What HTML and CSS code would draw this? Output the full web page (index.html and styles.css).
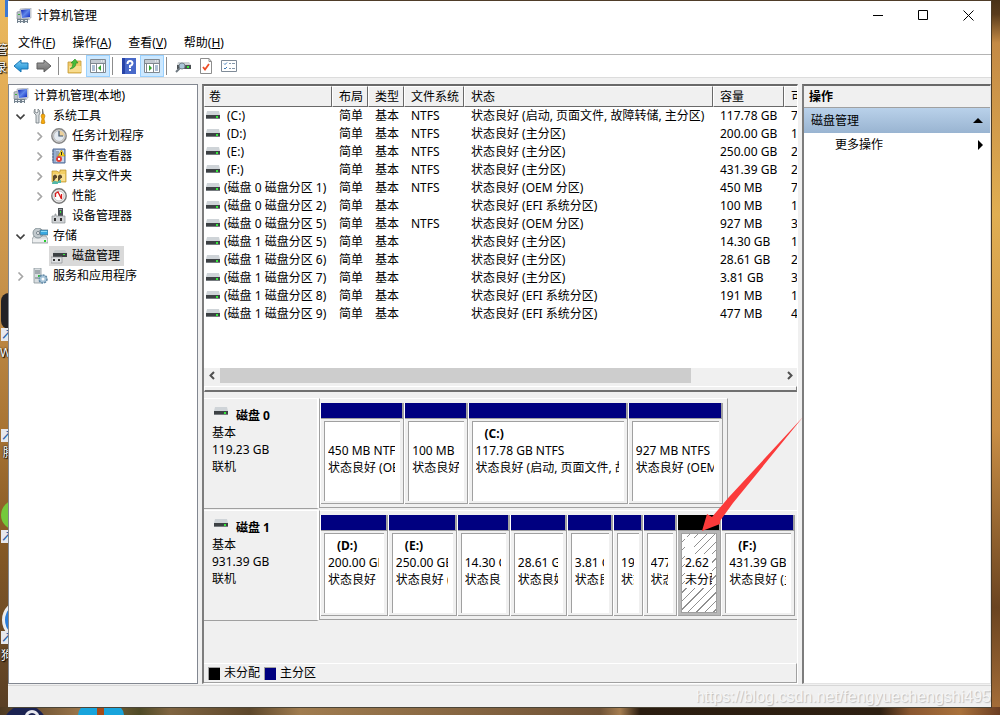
FILE: index.html
```html
<!DOCTYPE html>
<html lang="zh-CN">
<head>
<meta charset="utf-8">
<title>计算机管理</title>
<link rel="stylesheet" href="styles.css">
</head>
<body>
<svg class="defs" aria-hidden="true">
  <defs>
    <linearGradient id="gBlue" x1="0" y1="0" x2="1" y2="1"><stop offset="0" stop-color="#0a1fb0"/><stop offset=".5" stop-color="#5f86ea"/><stop offset="1" stop-color="#0a24c0"/></linearGradient>
    <linearGradient id="gArrow" x1="0" y1="0" x2="0" y2="1"><stop offset="0" stop-color="#7fd0f5"/><stop offset="1" stop-color="#0f86d0"/></linearGradient>
    <linearGradient id="gGrey" x1="0" y1="0" x2="0" y2="1"><stop offset="0" stop-color="#a8a8a8"/><stop offset="1" stop-color="#6c6c6c"/></linearGradient>
    <symbol id="computer" viewBox="0 0 16 16"><path d="M1 4l4-1v8H1z" fill="#b9c0c8" stroke="#77808a" stroke-width=".6"/><path d="M4 1l11-1v10l-10 1z" fill="#d8dce2" stroke="#9aa2ac" stroke-width=".6"/><path d="M5 2l9-1v8l-8 1z" fill="url(#gBlue)"/><path d="M7 10h6l1 2H7z" fill="#b3bac2"/><path d="M1 11h11v4H1z" fill="#74828e"/><path d="M2 12h2v1H2zM5 12h2v1H5zM9 12h2v1H9zM2 14h2v1H2zM5 14h2v1H5zM9 14h2v1H9z" fill="#eef2f5"/><path d="M2 6h2v1H2z" fill="#3cb43c"/></symbol>
    <symbol id="drive" viewBox="0 0 14 8"><path d="M1 0h12l1 4H0z" fill="#cfd4d8"/><path d="M0 4h14v4H0z" fill="#3d4144"/><path d="M0 7h14v1H0z" fill="#777c80"/><path d="M10 5h2v2h-2z" fill="#35e83b"/></symbol>
    <symbol id="tools" viewBox="0 0 16 16"><path d="M3 1v3l2 1 1-1V1q2 1 2 4L7 7v8H4V7L2 5q0-3 1-4z" fill="#d8dcdf" stroke="#70787e" stroke-width=".8"/><path d="M10 1h1l1 6h-2z" fill="#777"/><path d="M9 8q0-2 2-2t2 2l-1 3 1 4q-2 2-4 0l1-4z" fill="#f5a90c" stroke="#b97700" stroke-width=".6"/></symbol>
    <symbol id="clock" viewBox="0 0 16 16"><circle cx="8" cy="8" r="7.2" fill="#ddd" stroke="#858585" stroke-width="1.4"/><circle cx="8" cy="8" r="5.4" fill="#e4eaf0" stroke="#999" stroke-width=".6"/><path d="M8 8V2.600A5.400 5.400 0 0 1 13.400 8z" fill="#ecd19c"/><path d="M8 3v5h4" fill="none" stroke="#3c536d" stroke-width="1.200"/></symbol>
    <symbol id="events" viewBox="0 0 16 16"><path d="M2 1h12v14H2z" fill="#96aed0" stroke="#526b96"/><path d="M5 2h8v12H5z" fill="#c9d7ea"/><path d="M5 4h3M5 6h3M5 8h2M1 3h2M1 6h2M1 9h2M1 12h2" stroke="#5c6f89"/><path d="M10.500 2l3.500 6H7z" fill="#ffda25" stroke="#a98400" stroke-width=".6"/><path d="M10 4h1v3h-1z" fill="#222"/><circle cx="8" cy="11" r="3" fill="#e04038"/><path d="M7 10l2 2M9 10l-2 2" stroke="#fff"/></symbol>
    <symbol id="shared" viewBox="0 0 16 16"><path d="M1 3h5l1 1h2V2h6v12H1z" fill="#f3cf64" stroke="#b88d27" stroke-width=".7"/><path d="M2 6h12v7H2z" fill="#f9df91"/><path d="M2 8q2-3 4 0v2H5l-2 3H2zM7 8q2-3 4 0v2h-1l-2 3H7z" fill="#5c4a2c"/><path d="M1 16q0-3 3-3t3 3zM6 15q1-3 4-3v3z" fill="#51b7a9"/></symbol>
    <symbol id="perf" viewBox="0 0 16 16"><circle cx="8" cy="8" r="7.200" fill="#eee" stroke="#777" stroke-width="1.400"/><circle cx="8" cy="8" r="5" fill="#fff" stroke="#aaa" stroke-width=".7"/><path d="M4.500 9V5.500L7 4l3.500 7V6" fill="none" stroke="#d81c1c" stroke-width="1.300"/></symbol>
    <symbol id="device" viewBox="0 0 16 16"><path d="M7 0h5v8H7z" fill="#4c5256"/><path d="M8 1h3v1H8z" fill="#9da4a8"/><path d="M9 3h1v2H9z" fill="#35e83b"/><path d="M1 8h3V6h1v2h9v7H1z" fill="#d0d3d6" stroke="#8b9094" stroke-width=".7"/><path d="M3 10h2v3H3zM9 10h2v3H9z" fill="#333"/></symbol>
    <symbol id="storage" viewBox="0 0 16 16"><path d="M2 8h12l2 3v4H0v-4z" fill="#dee1e3" stroke="#858c90" stroke-width=".7"/><circle cx="6" cy="5" r="5" fill="#c2cace" stroke="#76858c" stroke-width=".8"/><circle cx="6" cy="5" r="1.500" fill="#fff" stroke="#75828a"/><path d="M8 2h8v5H8z" fill="#39a9e2" stroke="#536c7a" stroke-width=".7"/><path d="M9 3h6v1H9z" fill="#8cdbf7"/><path d="M1 11h14v3H1z" fill="#eceeef"/><path d="M12 12h2v2h-2z" fill="#27cc30"/></symbol>
    <symbol id="diskmgmt" viewBox="0 0 16 16"><path d="M4 2h10l2 3H2z" fill="#c6cacc"/><path d="M2 5h14v4H2z" fill="#3c4144"/><path d="M12 6h2v1h-2z" fill="#35e83b"/><path d="M0 9h11v6H0z" fill="#dfe1e3" stroke="#8c9194" stroke-width=".7"/><path d="M2 11h2v2H2zM7 11h2v2H7z" fill="#333"/></symbol>
    <symbol id="services" viewBox="0 0 16 16"><path d="M2 0h7v15H2z" fill="#d8dde0" stroke="#89949b" stroke-width=".8"/><path d="M3 3h5M3 5h5M3 10h3" stroke="#6b777e"/><path d="M6 7h2v2H6z" fill="#34bb42"/><circle cx="11" cy="11" r="4" fill="#a5c3d8" stroke="#6087a3" stroke-width="1.500" stroke-dasharray="2 1"/><circle cx="11" cy="11" r="1.500" fill="#fff"/></symbol>
    <symbol id="chevron-down" viewBox="0 0 9 9"><path d="M.5 2.500l4 4 4-4" fill="none" stroke="#404040" stroke-width="1.600"/></symbol>
    <symbol id="chevron-right" viewBox="0 0 9 9"><path d="M2.500.5l4 4-4 4" fill="none" stroke="#a6a6a6" stroke-width="1.600"/></symbol>
    <symbol id="arrow-left" viewBox="0 0 16 14"><path d="M1 7l7-6v3h7v6H8v3z"/></symbol>
    <symbol id="arrow-right" viewBox="0 0 16 14"><path d="M15 7L8 1v3H1v6h7v3z"/></symbol>
    <symbol id="folder-up" viewBox="0 0 16 16"><path d="M1 4h7l1-1h5v12H1z" fill="#f0c968" stroke="#c39a35" stroke-width=".8"/><path d="M2 8h12v6H2z" fill="#f8dc8e"/><path d="M3 11q3-2 3-6H4l4-4 3 4H9q0 5-6 6z" fill="#46bd3b" stroke="#258620" stroke-width=".6"/></symbol>
    <symbol id="pane-left" viewBox="0 0 16 14"><path d="M.5.5h15v13H.5z" fill="#fff" stroke="#808890"/><path d="M1 1h14v3H1z" fill="#c3cad1"/><path d="M11 2h1M13 2h1" stroke="#fff"/><path d="M0 4.500h16M6.500 5v9M13.500 5v9" stroke="#808890"/><path d="M2 7h3M2 9h3M2 11h3" stroke="#5a7ea8"/><path d="M11 6v6L8 9z" fill="#35a52e"/></symbol>
    <symbol id="pane-right" viewBox="0 0 16 14"><path d="M.5.5h15v13H.5z" fill="#fff" stroke="#808890"/><path d="M1 1h14v3H1z" fill="#c3cad1"/><path d="M11 2h1M13 2h1" stroke="#fff"/><path d="M0 4.500h16M2.500 5v9M9.500 5v9" stroke="#808890"/><path d="M11 7h3M11 9h3M11 11h3" stroke="#5a7ea8"/><path d="M5 6v6l3-3z" fill="#35a52e"/></symbol>
    <symbol id="help" viewBox="0 0 14 16"><path d="M0 0h14v16H0z" fill="#2743a7"/><path d="M3 0h11v16H3z" fill="#4869c9"/><path d="M5.500 6q0-3 2.500-3t2.500 2.500Q10.500 7 8 8v2" fill="none" stroke="#fff" stroke-width="2"/><path d="M7 11h2v2H7z" fill="#fff"/></symbol>
    <symbol id="rescan" viewBox="0 0 16 16"><path d="M3 4h11l2 3H2z" fill="#cdd1d4"/><path d="M2 7h14v4H2z" fill="#4b5053"/><path d="M12 8h2v2h-2z" fill="#35e83b"/><path d="M5 10l-4 4" stroke="#6e7880" stroke-width="2"/><circle cx="7" cy="8" r="3" fill="#a9c4d8" stroke="#75838d"/></symbol>
    <symbol id="check-doc" viewBox="0 0 12 16"><path d="M.5.5H9l2.500 3v12H.5z" fill="#fff" stroke="#8d8d8d"/><path d="M9 .5v3h2.500" fill="none" stroke="#8d8d8d"/><path d="M3 9l2 2.500L9 6" fill="none" stroke="#ee4d25" stroke-width="1.800"/></symbol>
    <symbol id="list" viewBox="0 0 16 12"><path d="M.5.5h15v11H.5z" fill="#fff" stroke="#7f8b98"/><path d="M3 3.500l1 1 2-2M3 8l1 1 2-2" fill="none" stroke="#3b78b6"/><path d="M8 3.500h2M11 3.500h3M8 8.500h2M11 8.500h3" stroke="#8497aa"/></symbol>
  </defs>
</svg>

<div class="desktop-icons" aria-hidden="true">
  <span class="shape red"></span>
  <span class="caption c1">管</span><span class="caption c2">录</span>
  <span class="shape dark"></span><span class="link l1">↗</span><span class="caption c3">W</span>
  <span class="link l2">↗</span><span class="caption c4">腾</span>
  <span class="shape green"></span><span class="link l3">↗</span>
  <span class="shape blue"></span><span class="link l4">↗</span><span class="caption c5">狗</span>
  <span class="task navy"></span><span class="task cyan"></span>
</div>

<div class="window">
  <header class="titlebar">
    <svg class="i16"><use href="#computer"/></svg>
    <h1>计算机管理</h1>
    <button type="button" aria-label="最小化"><svg class="i11" viewBox="0 0 11 11"><path d="M0 5.500h10"/></svg></button>
    <button type="button" aria-label="最大化"><svg class="i11" viewBox="0 0 11 11"><path d="M.5.5h9v9h-9z"/></svg></button>
    <button type="button" aria-label="关闭"><svg class="i11" viewBox="0 0 11 11"><path d="M.5.5l10 10M10.500.5l-10 10"/></svg></button>
  </header>
  <nav class="menubar">
    <button type="button">文件(<u>F</u>)</button>
    <button type="button">操作(<u>A</u>)</button>
    <button type="button">查看(<u>V</u>)</button>
    <button type="button">帮助(<u>H</u>)</button>
  </nav>
  <div class="toolbar" role="toolbar">
    <div class="history">
      <button type="button" aria-label="后退"><svg class="nav back"><use href="#arrow-left"/></svg></button>
      <button type="button" aria-label="前进"><svg class="nav forward"><use href="#arrow-right"/></svg></button>
    </div>
    <i class="sep"></i>
    <button type="button" aria-label="上移"><svg class="i16"><use href="#folder-up"/></svg></button>
    <button type="button" class="on" aria-label="显示控制台树"><svg class="i16x14"><use href="#pane-left"/></svg></button>
    <i class="sep"></i>
    <button type="button" aria-label="帮助"><svg class="i16"><use href="#help"/></svg></button>
    <button type="button" class="on" aria-label="显示操作窗格"><svg class="i16x14"><use href="#pane-right"/></svg></button>
    <i class="sep"></i>
    <button type="button" aria-label="重新扫描"><svg class="i16"><use href="#rescan"/></svg></button>
    <button type="button" aria-label="属性"><svg class="i16"><use href="#check-doc"/></svg></button>
    <button type="button" aria-label="设置"><svg class="i16x12"><use href="#list"/></svg></button>
  </div>

  <div class="panes">
    <nav class="tree">
      <span class="node"><svg class="i16"><use href="#computer"/></svg>计算机管理(本地)</span>
      <ul>
        <li><div class="row"><svg class="chev"><use href="#chevron-down"/></svg><span class="node"><svg class="i16"><use href="#tools"/></svg>系统工具</span></div>
          <ul>
            <li class="row"><svg class="chev"><use href="#chevron-right"/></svg><span class="node"><svg class="i16"><use href="#clock"/></svg>任务计划程序</span></li>
            <li class="row"><svg class="chev"><use href="#chevron-right"/></svg><span class="node"><svg class="i16"><use href="#events"/></svg>事件查看器</span></li>
            <li class="row"><svg class="chev"><use href="#chevron-right"/></svg><span class="node"><svg class="i16"><use href="#shared"/></svg>共享文件夹</span></li>
            <li class="row"><svg class="chev"><use href="#chevron-right"/></svg><span class="node"><svg class="i16"><use href="#perf"/></svg>性能</span></li>
            <li class="row"><svg class="chev"></svg><span class="node"><svg class="i16"><use href="#device"/></svg>设备管理器</span></li>
          </ul></li>
        <li><div class="row"><svg class="chev"><use href="#chevron-down"/></svg><span class="node"><svg class="i16"><use href="#storage"/></svg>存储</span></div>
          <ul><li class="row"><svg class="chev"></svg><span class="node selected"><svg class="i16"><use href="#diskmgmt"/></svg>磁盘管理</span></li></ul></li>
        <li><div class="row"><svg class="chev"><use href="#chevron-right"/></svg><span class="node"><svg class="i16"><use href="#services"/></svg>服务和应用程序</span></div></li>
      </ul>
    </nav>

    <main class="content">
      <section class="volumes">
        <div class="volume-list">
          <table>
            <colgroup><col class="w-name"><col class="w-short"><col class="w-short"><col class="w-fs"><col><col class="w-size"><col class="w-cut"></colgroup>
            <thead><tr><th>卷</th><th>布局</th><th>类型</th><th>文件系统</th><th>状态</th><th>容量</th><th>可用空间</th></tr></thead>
            <tbody>
              <tr><td class="letter"><svg class="drive"><use href="#drive"/></svg>(C:)</td><td>简单</td><td>基本</td><td>NTFS</td><td>状态良好 (启动, 页面文件, 故障转储, 主分区)</td><td>117.78 GB</td><td>7</td></tr>
              <tr><td class="letter"><svg class="drive"><use href="#drive"/></svg>(D:)</td><td>简单</td><td>基本</td><td>NTFS</td><td>状态良好 (主分区)</td><td>200.00 GB</td><td>1</td></tr>
              <tr><td class="letter"><svg class="drive"><use href="#drive"/></svg>(E:)</td><td>简单</td><td>基本</td><td>NTFS</td><td>状态良好 (主分区)</td><td>250.00 GB</td><td>2</td></tr>
              <tr><td class="letter"><svg class="drive"><use href="#drive"/></svg>(F:)</td><td>简单</td><td>基本</td><td>NTFS</td><td>状态良好 (主分区)</td><td>431.39 GB</td><td>2</td></tr>
              <tr><td><svg class="drive"><use href="#drive"/></svg>(磁盘 0 磁盘分区 1)</td><td>简单</td><td>基本</td><td>NTFS</td><td>状态良好 (OEM 分区)</td><td>450 MB</td><td>7</td></tr>
              <tr><td><svg class="drive"><use href="#drive"/></svg>(磁盘 0 磁盘分区 2)</td><td>简单</td><td>基本</td><td></td><td>状态良好 (EFI 系统分区)</td><td>100 MB</td><td>1</td></tr>
              <tr><td><svg class="drive"><use href="#drive"/></svg>(磁盘 0 磁盘分区 5)</td><td>简单</td><td>基本</td><td>NTFS</td><td>状态良好 (OEM 分区)</td><td>927 MB</td><td>3</td></tr>
              <tr><td><svg class="drive"><use href="#drive"/></svg>(磁盘 1 磁盘分区 5)</td><td>简单</td><td>基本</td><td></td><td>状态良好 (主分区)</td><td>14.30 GB</td><td>1</td></tr>
              <tr><td><svg class="drive"><use href="#drive"/></svg>(磁盘 1 磁盘分区 6)</td><td>简单</td><td>基本</td><td></td><td>状态良好 (主分区)</td><td>28.61 GB</td><td>2</td></tr>
              <tr><td><svg class="drive"><use href="#drive"/></svg>(磁盘 1 磁盘分区 7)</td><td>简单</td><td>基本</td><td></td><td>状态良好 (主分区)</td><td>3.81 GB</td><td>3</td></tr>
              <tr><td><svg class="drive"><use href="#drive"/></svg>(磁盘 1 磁盘分区 8)</td><td>简单</td><td>基本</td><td></td><td>状态良好 (EFI 系统分区)</td><td>191 MB</td><td>1</td></tr>
              <tr><td><svg class="drive"><use href="#drive"/></svg>(磁盘 1 磁盘分区 9)</td><td>简单</td><td>基本</td><td></td><td>状态良好 (EFI 系统分区)</td><td>477 MB</td><td>4</td></tr>
            </tbody>
          </table>
        </div>
        <div class="scrollbar">
          <button type="button" aria-label="向左滚动"><svg viewBox="0 0 9 9"><path d="M6 1L2.500 4.500 6 8"/></svg></button>
          <div class="rail"><div class="thumb"></div></div>
          <button type="button" aria-label="向右滚动"><svg viewBox="0 0 9 9"><path d="M3 1l3.500 3.500L3 8"/></svg></button>
        </div>
        <div class="splitter"></div>
      </section>

      <section class="graph">
        <article class="disk">
          <div class="disk-label">
            <h2><svg class="drive"><use href="#drive"/></svg>磁盘 0</h2>
            <p>基本</p><p>119.23 GB</p><p>联机</p>
          </div>
          <div class="track" style="flex-grow:408">
            <div class="part" style="flex-grow:84"><div class="bar"></div><div class="body"><div class="info"><b></b><p>450 MB NTFS</p><p>状态良好 (OEM 分区)</p></div></div></div>
            <div class="part" style="flex-grow:63"><div class="bar"></div><div class="body"><div class="info"><b></b><p>100 MB</p><p>状态良好 (EFI 系统分区)</p></div></div></div>
            <div class="part" style="flex-grow:161"><div class="bar"></div><div class="body"><div class="info"><b>(C:)</b><p>117.78 GB NTFS</p><p>状态良好 (启动, 页面文件, 故障转储, 主分区)</p></div></div></div>
            <div class="part" style="flex-grow:95"><div class="bar"></div><div class="body"><div class="info"><b></b><p>927 MB NTFS</p><p>状态良好 (OEM 分区)</p></div></div></div>
          </div>
          <div style="flex-grow:70"></div>
        </article>
        <article class="disk">
          <div class="disk-label">
            <h2><svg class="drive"><use href="#drive"/></svg>磁盘 1</h2>
            <p>基本</p><p>931.39 GB</p><p>联机</p>
          </div>
          <div class="track full" style="flex-grow:478">
            <div class="part" style="flex-grow:68"><div class="bar"></div><div class="body"><div class="info"><b>(D:)</b><p>200.00 GB NTFS</p><p>状态良好 (主分区)</p></div></div></div>
            <div class="part" style="flex-grow:69"><div class="bar"></div><div class="body"><div class="info"><b>(E:)</b><p>250.00 GB NTFS</p><p>状态良好 (主分区)</p></div></div></div>
            <div class="part" style="flex-grow:53"><div class="bar"></div><div class="body"><div class="info"><b></b><p>14.30 GB</p><p>状态良好 (主分区)</p></div></div></div>
            <div class="part" style="flex-grow:57"><div class="bar"></div><div class="body"><div class="info"><b></b><p>28.61 GB</p><p>状态良好 (主分区)</p></div></div></div>
            <div class="part" style="flex-grow:46"><div class="bar"></div><div class="body"><div class="info"><b></b><p>3.81 GB</p><p>状态良好 (主分区)</p></div></div></div>
            <div class="part" style="flex-grow:29"><div class="bar"></div><div class="body"><div class="info"><b></b><p>191 MB</p><p>状态良好</p></div></div></div>
            <div class="part" style="flex-grow:34"><div class="bar"></div><div class="body"><div class="info"><b></b><p>477 MB</p><p>状态良好</p></div></div></div>
            <div class="part free" style="flex-grow:44"><div class="bar"></div><div class="body"><div class="info"><b></b><p>2.62 GB</p><p>未分配</p></div></div></div>
            <div class="part" style="flex-grow:74"><div class="bar"></div><div class="body"><div class="info"><b>(F:)</b><p>431.39 GB NTFS</p><p>状态良好 (主分区)</p></div></div></div>
          </div>
        </article>
        <footer class="legend"><i class="black"></i><span>未分配</span><i></i><span>主分区</span></footer>
        <svg class="pointer" viewBox="0 0 101 115" aria-hidden="true"><path d="M101 0L31 86l-13 18v3L0 114l5-17 5 3 17-20z" fill="#fb3b3b"/></svg>
      </section>
    </main>

    <aside class="actions">
      <h2>操作</h2>
      <button type="button" class="group">磁盘管理<svg viewBox="0 0 10 5"><path d="M5 0l5 5H0z"/></svg></button>
      <button type="button" class="more">更多操作<svg viewBox="0 0 5 10"><path d="M0 0l5 5-5 5z"/></svg></button>
    </aside>
  </div>
  <footer class="statusbar"><span>https://blog.csdn.net/fengyuechengshi495</span></footer>
</div>
</body>
</html>
```
FILE: styles.css
```css
* { box-sizing: border-box; }
body, h1, h2, p, ul { margin: 0; padding: 0; }
ul { list-style: none; }
body {
  display: flex;
  min-height: 100vh;
  padding: 1px 8px 7px 8px;
  font: 12px/18px "Noto Sans", "Noto Sans CJK SC", sans-serif;
  color: #000;
  background:
    linear-gradient(90deg, #4e3a22 0, #9a754a 8%, #4f4a26 14%, #806541 17%, #5d472b 25%, #a07c4f 30%, #705337 60%, #a57d50 62%, #2b1d10 64%, #2e2012 88%, #8a5730 91%, #a9713b 96%, #6a3d22 100%) bottom / 100% 8px no-repeat,
    linear-gradient(#4a3217 0, #5a3c1c 2%, #c48a45 6%, #e0ae52 30%, #c98e45 60%, #6b4420 85%, #a8703a 100%) right / 8px 100% no-repeat,
    linear-gradient(#eab95e 0, #dfa650 20%, #c6914a 40%, #a87434 60%, #875a26 75%, #573e25 100%) left / 8px 100% no-repeat,
    #4f3d29;
}
button { margin: 0; padding: 0; border: 0; background: none; font: inherit; color: inherit; }
svg { display: block; flex: none; }
.defs { position: absolute; width: 0; height: 0; }
.i16 { width: 16px; height: 16px; }
.i16x14 { width: 16px; height: 14px; }
.i16x12 { width: 16px; height: 12px; }
.i11 { width: 11px; height: 11px; fill: none; stroke: #000; }
.drive { width: 14px; height: 8px; }

.desktop-icons { position: absolute; inset: 0; height: 100vh; overflow: hidden; }
.desktop-icons span { position: absolute; }
.caption { color: #fff; text-shadow: 0 0 2px #000, 1px 1px 1px #000; left: 0; }
.c1 { top: 41px; left: -4px; }
.c2 { top: 59px; left: -5px; }
.c3 { top: 344px; }
.c4 { top: 444px; left: 3px; }
.c5 { top: 647px; left: 1px; }
.link { left: 1px; width: 12px; height: 13px; background: #e6e8ee; color: #2860a8; font-weight: bold; line-height: 13px; }
.l1 { top: 328px; }
.l2 { top: 429px; }
.l3 { top: 530px; }
.l4 { top: 631px; }
.red { top: 0; left: 5px; width: 4px; height: 17px; background: #3c78d2; }
.dark { top: 293px; left: 1px; width: 40px; height: 36px; border-radius: 8px; background: #222126; }
.green { top: 500px; left: 1px; width: 30px; height: 30px; border-radius: 50%; background: #75c93c; }
.blue { top: 600px; left: 2px; width: 40px; height: 40px; border: 3px solid #eee; border-radius: 50%; background: #297ddb; }
.navy { bottom: -32px; left: 3px; width: 44px; height: 42px; border-radius: 50%; background: radial-gradient(circle at 66% 30%, #1b2352 0 4px, #e8e8ef 5px 7px, #1b2352 8px); }
.cyan { bottom: -12px; left: 78px; width: 46px; height: 22px; border-radius: 10px; background: linear-gradient(90deg, #18a4dc 19px, #a74b18 19px 26px, #18a4dc 26px); }

.window { position: relative; flex: 1; min-width: 0; display: flex; flex-direction: column; background: #f0f0f0; border-right: 1px solid #4b3b27; border-bottom: 1px solid #4b4538; }
.titlebar { display: flex; align-items: center; height: 29px; padding-left: 8px; background: #fff; }
.titlebar h1 { flex: 1; margin-left: 5px; font-size: 12px; font-weight: normal; }
.titlebar button { display: grid; place-items: center; width: 45px; height: 29px; }
.menubar { display: flex; gap: 17px; height: 25px; padding: 4px 10px 2px; background: #fff; border-bottom: 1px solid #b4b4b4; }
.toolbar { display: flex; align-items: center; height: 23px; padding-left: 1px; background: #fff; border-bottom: 1px solid #dcdcdc; }
.toolbar button { display: grid; place-items: center; width: 23px; height: 22px; }
.toolbar .on { width: 24px; background: #cce8ff; border: 1px solid #99d1ff; }
.history { display: flex; padding-right: 1px; }
.sep { width: 1px; height: 18px; margin: 0 4px 0 2px; background: #8c8c8c; }
.nav { width: 16px; height: 14px; }
.back { fill: url(#gArrow); stroke: #1774b4; }
.forward { fill: url(#gGrey); stroke: #5e5e5e; }

.panes { flex: 1; display: grid; grid-template-columns: 190px minmax(0, 1fr) 189px; gap: 4px; padding: 6px 0 1px; }
.tree { padding: 1px 2px; background: #fff; border: 1px solid #828790; }
.tree > ul { padding-left: 1px; }
.tree ul ul { padding-left: 19px; }
.row { display: flex; align-items: center; }
.chev { width: 9px; height: 9px; margin: 0 5px 0 4px; }
.node { display: inline-flex; align-items: center; gap: 5px; height: 20px; padding: 0 4px 0 2px; vertical-align: top; white-space: nowrap; }
.selected { background: #d9d9d9; }

.content { display: flex; flex-direction: column; min-width: 0; border: solid; border-width: 2px 1px 1px 2px; border-color: #696969 #fff #fff #7d7d7d; }
.volumes { flex: 309 1 0; display: flex; flex-direction: column; }
.volume-list { flex: 1; background: #fff; overflow: hidden; }
table { width: 100%; table-layout: fixed; border-collapse: separate; border-spacing: 0; }
.w-name { width: 128px; }
.w-short { width: 36px; }
.w-fs { width: 60px; }
.w-size { width: 71px; }
.w-cut { width: 13px; }
th, td { height: 18px; padding: 0 0 0 7px; overflow: hidden; text-align: left; font-weight: normal; line-height: 18px; white-space: nowrap; }
th { height: 21px; padding-left: 6px; background: #f0f0f0; border: solid; border-width: 1px; border-color: #fff #696969 #696969 #fff; }
th:first-child { padding-left: 4px; }
th:last-child { border-right: 0; }
td:first-child { padding-left: 2px; }
td .drive { display: inline-block; margin-right: 4px; vertical-align: 1px; }
.letter .drive { margin-right: 7px; }
.scrollbar { display: flex; height: 16px; background: #f0f0f0; }
.scrollbar button { display: grid; place-items: center; width: 16px; height: 16px; }
.scrollbar svg { width: 9px; height: 9px; fill: none; stroke: #505050; stroke-width: 2; }
.rail { flex: 1; }
.thumb { width: 84%; height: 15px; background: #cdcdcd; }
.splitter { height: 6px; margin-top: 2px; border: solid; border-width: 1px 1px 2px; border-color: #fff #808080 #707070 #fff; }

.graph { position: relative; flex: 288 1 0; display: flex; flex-direction: column; padding-top: 6px; }
.disk { display: flex; margin-bottom: 1px; }
.disk-label { flex: none; width: 115px; height: 111px; padding: 8px 0 0 8px; border-top: 1px solid #fff; border-right: 2px solid #fff; border-bottom: 1px solid #a0a0a0; line-height: 17px; }
.disk-label h2 { display: flex; gap: 8px; font-size: 12px; line-height: 17px; }
.disk-label .drive { margin: 0 0 0 2px; }
.track { flex: 1 1 0; display: flex; min-width: 0; height: 110px; padding: 4px 4px 3px 0; border: 1px solid #a0a0a0; border-top-color: #fff; }
.track.full { padding-right: 2px; border-right: 0; }
.part { flex: 1 1 0; min-width: 0; display: flex; flex-direction: column; border-left: 1px solid #fff; }
.bar { height: 16px; background: #000080; border: solid #a0a0a0; border-width: 0 2px 1px 0; }
.body { flex: 1; display: flex; min-width: 0; padding: 2px 3px; border: solid #a0a0a0; border-width: 0 1px 1px 0; }
.info { flex: 1; min-width: 0; padding: 3px 5px 0 3px; overflow: hidden; background: #fff; border: solid #a0a0a0; border-width: 1px 0 0 1px; line-height: 17px; white-space: nowrap; }
.info b { display: block; height: 17px; padding-left: 9px; }
.info p { overflow: hidden; }
.free .bar { background: #000; }
.free .body { background: #b8b8b8; }
.free .info { padding-right: 4px; border-width: 1px; background: repeating-linear-gradient(135deg, #fff 0 5px, #909090 5px 6px); }
.free b { width: 9px; background: #fff; }
.free p { background: #fff; }
.legend { display: flex; align-items: center; gap: 4px; height: 20px; margin-top: auto; padding-left: 4px; border: solid; border-width: 1px 1px 1px 0; border-color: #fff #a0a0a0 #a0a0a0; }
.legend i { width: 12px; height: 13px; background: #000080; border: solid #a0a0a0; border-width: 1px 0 0 1px; }
.legend .black { background: #000; }
.pointer { position: absolute; top: 25px; right: -6px; width: 101px; height: 115px; }

.actions { background: #fff; border: solid; border-width: 2px 1px 1px 2px; border-color: #696969 #e3e3e3 #e3e3e3 #7d7d7d; }
.actions h2 { height: 22px; padding: 2px 5px; background: #f0f0f0; border-bottom: 1px solid #a0a0a0; font-size: 12px; line-height: 18px; }
.actions button { display: flex; align-items: center; justify-content: space-between; width: 100%; height: 24px; padding: 0 7px; }
.actions .group { height: 25px; background: linear-gradient(#b9d1ea, #99b4d1); }
.group svg { width: 10px; height: 5px; }
.actions .more { padding-left: 31px; }
.more svg { width: 5px; height: 10px; }
.statusbar { height: 22px; border-top: 1px solid #d7d7d7; overflow: hidden; text-align: right; }
.statusbar span { color: #f6f6f6; font: 16px/21px "Liberation Sans", Arial, sans-serif; text-shadow: 1px 1px 1px #bcbcbc; }
```
